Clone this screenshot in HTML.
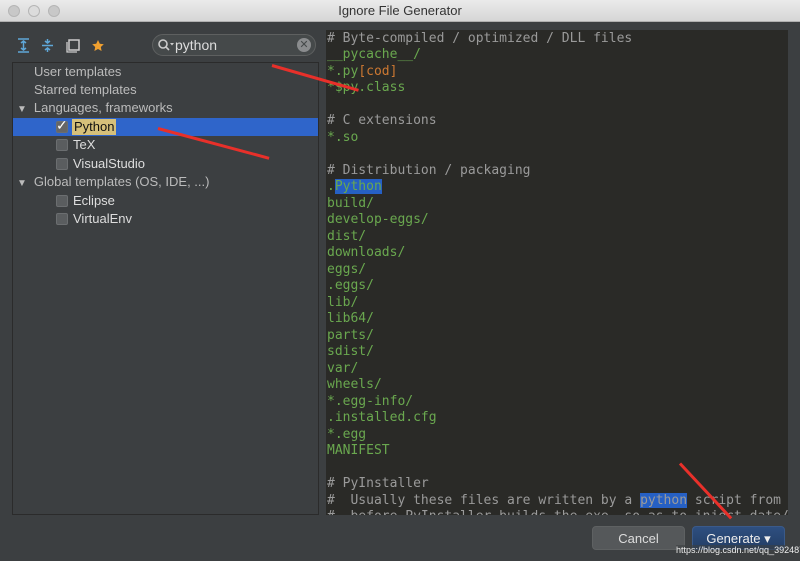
<!DOCTYPE html>
<html><head><style>
*{margin:0;padding:0;box-sizing:border-box}
body{width:800px;height:561px;background:#3c3f41;font-family:"Liberation Sans",sans-serif;position:relative;overflow:hidden}
.title{position:absolute;left:0;top:0;width:800px;height:22px;background:linear-gradient(#ebebeb,#d6d6d6);border-bottom:1px solid #b0b0b0;text-align:center;font-size:13px;line-height:22px;color:#333}
.dot{position:absolute;top:5px;width:12px;height:12px;border-radius:50%;background:#c8c8c8;border:1px solid #b5b5b5}
.tree{position:absolute;left:12px;top:62px;width:307px;height:453px;border:1px solid #2b2b2b;background:#3c3f41;font-size:13px;color:#bbb}
.row{position:absolute;left:0;width:305px;height:18px;line-height:18px}
.cb{position:absolute;top:3px;width:12px;height:12px;background:#5a5d5f;border:1px solid #6b6e70;border-radius:2px}
.ed{position:absolute;left:326px;top:30px;width:462px;height:485px;background:#2a2a27;overflow:hidden;font-family:"DejaVu Sans Mono",monospace;font-size:13px;line-height:16.48px;color:#6aa84f;padding:1px 0 0 1px;white-space:pre}
.c{color:#9a9a9a}.o{color:#cc7832}.h{background:#2660c4}
.search{position:absolute;left:152px;top:34px;width:164px;height:22px;border-radius:11px;background:#45494a;border:1px solid #5e6060;color:#ddd;font-size:14px;line-height:20px;padding-left:22px}
.btn{position:absolute;top:526px;height:24px;border-radius:4px;font-size:13px;line-height:24px;text-align:center;color:#ddd}
.arrow{position:absolute;height:3px;background:#e8302a;transform-origin:0 50%}
</style></head><body>
<div class="title">Ignore File Generator</div>
<div class="dot" style="left:8px"></div><div class="dot" style="left:28px;background:#dcdcdc"></div><div class="dot" style="left:48px"></div>
<svg style="position:absolute;left:16px;top:38px" width="95" height="16">
<g stroke="#5fa7d8" stroke-width="1.5" fill="none"><path d="M2 1h11M2 14h11M7.5 3v9M5 5l2.5-2 2.5 2M5 10l2.5 2 2.5-2"/>
<path d="M26 7.5h11M31.5 1v4M31.5 10v4M29 3l2.5 2 2.5-2M29 12l2.5-2 2.5 2"/></g>
<rect x="53" y="2" width="10" height="10" fill="none" stroke="#ccc" stroke-width="1.5"/><path d="M51 4v10h10" stroke="#ccc" fill="none" stroke-width="1.3"/>
<path d="M82 2l1.8 3.8 4 .5-3 2.7.8 4-3.6-2-3.6 2 .8-4-3-2.7 4-.5z" fill="#f0a030"/></svg>
<div class="search">python<svg style="position:absolute;left:4px;top:3px" width="18" height="14"><circle cx="6" cy="6" r="4" stroke="#ccc" stroke-width="1.6" fill="none"/><path d="M9 9l3 3" stroke="#ccc" stroke-width="1.6"/><path d="M13 5h4l-2 2.5z" fill="#ccc"/></svg><div style="position:absolute;right:4px;top:3px;width:14px;height:14px;border-radius:50%;background:#8a8c8e;color:#45494a;font-size:11px;line-height:14px;text-align:center">✕</div></div>
<div class="tree">
<div class="row" style="top:0"><span style="margin-left:21px">User templates</span></div>
<div class="row" style="top:18px"><span style="margin-left:21px">Starred templates</span></div>
<div class="row" style="top:36px"><span style="margin-left:4px;font-size:10px">▼</span><span style="margin-left:7px">Languages, frameworks</span></div>
<div class="row" style="top:55px;background:#2f65ca;color:#fff"><div class="cb" style="left:43px;background:#666"></div><span style="position:absolute;left:43px;top:-2px;color:#fff;font-size:14px">✓</span><span style="position:absolute;left:59px;background:#d6c07a;color:#111;padding:0 2px;line-height:16px;top:1px">Python</span></div>
<div class="row" style="top:73px"><div class="cb" style="left:43px"></div><span style="position:absolute;left:60px;color:#ddd">TeX</span></div>
<div class="row" style="top:92px"><div class="cb" style="left:43px"></div><span style="position:absolute;left:60px;color:#ddd">VisualStudio</span></div>
<div class="row" style="top:110px"><span style="margin-left:4px;font-size:10px">▼</span><span style="margin-left:7px">Global templates (OS, IDE, ...)</span></div>
<div class="row" style="top:129px"><div class="cb" style="left:43px"></div><span style="position:absolute;left:60px;color:#ddd">Eclipse</span></div>
<div class="row" style="top:147px"><div class="cb" style="left:43px"></div><span style="position:absolute;left:60px;color:#ddd">VirtualEnv</span></div>
</div>
<div class="ed"><span class="c"># Byte-compiled / optimized / DLL files</span>
__pycache__/
*.py<span class="o">[cod]</span>
*$py.class

<span class="c"># C extensions</span>
*.so

<span class="c"># Distribution / packaging</span>
.<span class="h">Python</span>
build/
develop-eggs/
dist/
downloads/
eggs/
.eggs/
lib/
lib64/
parts/
sdist/
var/
wheels/
*.egg-info/
.installed.cfg
*.egg
MANIFEST

<span class="c"># PyInstaller</span>
<span class="c">#  Usually these files are written by a <span class="h">python</span> script from a</span>
<span class="c">#  before PyInstaller builds the exe, so as to inject date/</span></div>
<div class="btn" style="left:592px;width:93px;background:#55585a;border:1px solid #5e6162">Cancel</div>
<div class="btn" style="left:692px;width:93px;background:linear-gradient(#2e4f80,#233e66);border:1px solid #3a5a8a;color:#eee">Generate ▾</div>
<div style="position:absolute;left:676px;top:545px;font-size:9px;color:#eee;background:rgba(60,63,65,.6)">https://blog.csdn.net/qq_39248703</div>
<div class="arrow" style="left:272px;top:64px;width:90px;transform:rotate(16deg)"></div>
<div class="arrow" style="left:158px;top:127px;width:115px;transform:rotate(15deg)"></div>
<div class="arrow" style="left:680px;top:462px;width:75px;transform:rotate(47deg)"></div>
</body></html>
